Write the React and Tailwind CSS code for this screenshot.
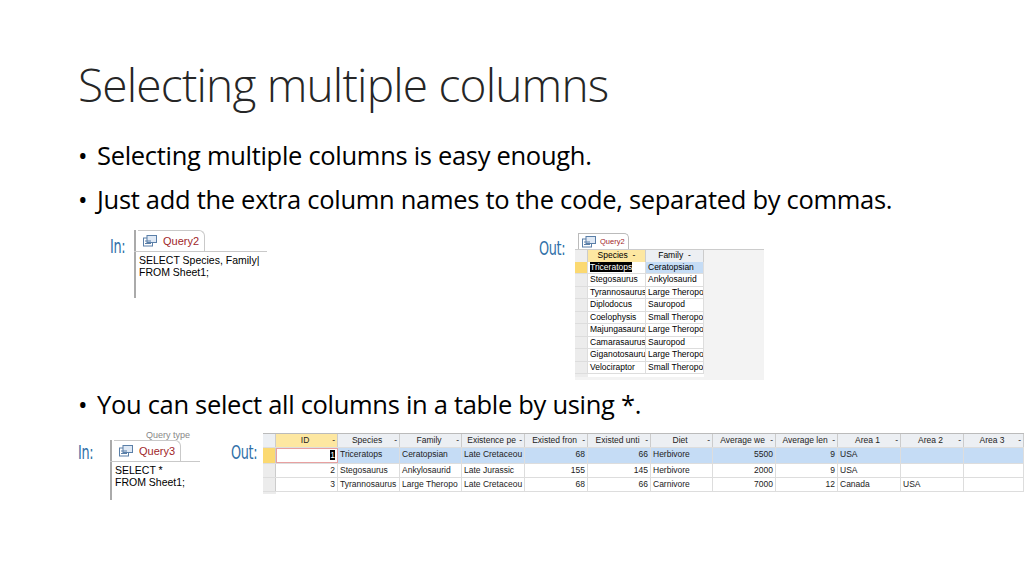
import React from "react";

const font = { fontFamily: '"Open Sans", "Noto Sans", sans-serif' };
const seg = { fontFamily: '"Liberation Sans", "DejaVu Sans", sans-serif' };

function TabIcon() {
  return (
    <svg width="14" height="12" viewBox="0 0 14 12">
      <rect x="0.5" y="3" width="9" height="8" fill="#fff" stroke="#5a7fa8" />
      <rect x="4" y="0.5" width="9.5" height="7" fill="#dfe9f5" stroke="#5a7fa8" />
      <line x1="2" y1="6" x2="8" y2="6" stroke="#5a7fa8" />
      <line x1="2" y1="8.5" x2="8" y2="8.5" stroke="#5a7fa8" />
    </svg>
  );
}

function QueryIn({ name, lines, w, extra, h }) {
  return (
    <div className="relative bg-white" style={{ width: w, ...seg }}>
      {extra}
      <div className="flex h-[22px] border-b border-[#c9c9c9]">
        <div className="w-[4px] border-l-2 border-[#aaa]" />
        <div className="flex items-center gap-[6px] px-[5px] border-r border-t border-[#c9c9c9] rounded-tr-[6px] bg-white">
          <TabIcon />
          <span className="text-[11px] text-[#a1262a]">{name}</span>
        </div>
      </div>
      <div className="flex">
        <div className="w-[4px] border-l-2 border-[#aaa]" style={{ height: h }} />
        <div className="text-[10.5px] leading-[12px] text-black pl-[1px] pt-[2px] whitespace-nowrap">
          {lines.map((l, i) => <div key={i}>{l}</div>)}
        </div>
      </div>
    </div>
  );
}

const small = [
  ["Triceratops", "Ceratopsian"], ["Stegosaurus", "Ankylosaurid"], ["Tyrannosaurus", "Large Theropo"],
  ["Diplodocus", "Sauropod"], ["Coelophysis", "Small Theropo"], ["Majungasaurus", "Large Theropo"],
  ["Camarasaurus", "Sauropod"], ["Giganotosauru", "Large Theropo"], ["Velociraptor", "Small Theropo"],
];

const cols = [
  ["ID", 62], ["Species", 62], ["Family", 62], ["Existence pe", 63], ["Existed fron", 63],
  ["Existed unti", 63], ["Diet", 62], ["Average we", 63], ["Average len", 62], ["Area 1", 63], ["Area 2", 63], ["Area 3", 60],
];
const rows = [
  ["1", "Triceratops", "Ceratopsian", "Late Cretaceou", "68", "66", "Herbivore", "5500", "9", "USA", "", ""],
  ["2", "Stegosaurus", "Ankylosaurid", "Late Jurassic", "155", "145", "Herbivore", "2000", "9", "USA", "", ""],
  ["3", "Tyrannosaurus", "Large Theropo", "Late Cretaceou", "68", "66", "Carnivore", "7000", "12", "Canada", "USA", ""],
];
const rightAlign = [0, 4, 5, 7, 8];

function Label({ t }) {
  return <span className="text-[19px] text-[#2f6fa8] tracking-tight" style={{ fontFamily: '"DejaVu Sans Condensed", "Liberation Sans Narrow", sans-serif', transform: "scaleX(0.75)", display: "inline-block", transformOrigin: "left" }}>{t}</span>;
}

export default function App() {
  return (
    <div className="w-[1024px] h-[576px] bg-white overflow-hidden relative" style={font}>
      <div className="pl-[78px] pt-[55px]">
        <h1 className="text-[46px] leading-[58px] text-[#262626] font-light" style={{ letterSpacing: "-0.8px" }}>Selecting multiple columns</h1>
        <ul className="mt-[20px] text-[25.5px] leading-[44px] text-black" style={{ letterSpacing: "-0.3px" }}>
          <li className="flex"><span className="w-[19px]">•</span>Selecting multiple columns is easy enough.</li>
          <li className="flex"><span className="w-[19px]">•</span>Just add the extra column names to the code, separated by commas.</li>
        </ul>
      </div>

      <div className="flex mt-[9px] h-[150px]">
        <div className="ml-[110px] pt-[2px] w-[24px]"><Label t="In:" /></div>
        <div><QueryIn name="Query2" w={133} h={46} lines={["SELECT Species, Family|", "FROM Sheet1;"]} /></div>
        <div className="ml-[272px] pt-[4px] w-[36px]"><Label t="Out:" /></div>
        <div className="w-[189px] bg-[#f3f3f3]" style={seg}>
          <div className="flex h-[20px] pt-[3px] border-b border-[#ccc] bg-white">
            <div className="w-[3px]" />
            <div className="flex items-center gap-[4px] px-[3px] border border-b-0 border-[#bbb] bg-white rounded-tr-[5px]">
              <TabIcon /><span className="text-[7.5px] text-[#a1262a]">Query2</span>
            </div>
          </div>
          <div className="text-[8.5px] leading-[11.5px]">
            <div className="flex">
              <div className="w-[13px] bg-[#eee] border-r border-[#ccc]" />
              <div className="w-[58px] bg-[#fde7a1] border-r border-[#ccc] text-center">Species&nbsp; -</div>
              <div className="w-[58px] bg-[#eceff3] border-r border-[#ccc] text-center">Family&nbsp; -</div>
            </div>
            {small.map((r, i) => (
              <div key={i} className="flex">
                <div className={`w-[13px] border-r border-b border-[#ddd] ${i === 0 ? "bg-[#fbd971]" : "bg-[#ececec]"}`} />
                <div className="w-[58px] border-r border-b border-[#ddd] bg-white pl-[2px] whitespace-nowrap overflow-hidden">
                  {i === 0 ? <span className="bg-black text-white">{r[0]}</span> : r[0]}
                </div>
                <div className={`w-[58px] border-r border-b border-[#ddd] pl-[2px] whitespace-nowrap overflow-hidden ${i === 0 ? "bg-[#c5dcf5]" : "bg-white"}`}>{r[1]}</div>
              </div>
            ))}
            <div className="h-[3px] flex"><div className="w-[13px] bg-[#ececec]" /><div className="w-[116px] bg-white" /></div>
          </div>
        </div>
      </div>

      <div className="pl-[78px] mt-[4px] text-[25.5px] leading-[40px] text-black flex" style={{ letterSpacing: "-0.3px" }}>
        <span className="w-[19px]">•</span>You can select all columns in a table by using *.
      </div>

      <div className="flex mt-[8px]">
        <div className="ml-[78px] pt-[6px] w-[32px]"><Label t="In:" /></div>
        <div>
          <QueryIn name="Query3" w={90} h={38} lines={["SELECT *", "FROM Sheet1;"]}
            extra={<div className="text-[9px] text-[#888] h-[8px] leading-[6px] overflow-hidden pl-[36px] whitespace-nowrap">Query type</div>} />
        </div>
        <div className="ml-[31px] pt-[6px] w-[32px]"><Label t="Out:" /></div>
        <div className="mt-[1px] border-t border-[#bbb] bg-white" style={seg}>
          <div className="text-[8.5px] leading-[13px] text-[#222]">
            <div className="flex bg-[#eceff3]">
              <div className="w-[13px] border-r border-[#ccc]" />
              {cols.map((c, i) => (
                <div key={i} className={`border-r border-[#ccc] whitespace-nowrap overflow-hidden flex justify-between px-[2px] ${i === 0 ? "bg-[#fde7a1]" : ""}`} style={{ width: c[1] }}>
                  <span className="flex-1 text-center">{c[0]}</span><span>-</span>
                </div>
              ))}
            </div>
            {rows.map((r, ri) => (
              <div key={ri} className={`flex border-t border-[#ddd] ${ri === 0 ? "bg-[#c5dcf5]" : ""}`}>
                <div className={`w-[13px] border-r border-[#ccc] ${ri === 0 ? "bg-[#fbd971]" : "bg-[#ececec]"}`} />
                {r.map((v, i) => (
                  <div key={i} className={`border-r border-[#ddd] whitespace-nowrap overflow-hidden px-[2px] ${rightAlign.includes(i) ? "text-right" : ""} ${ri === 0 && i === 0 ? "bg-white border border-[#e8a0a0]" : ""}`} style={{ width: cols[i][1] }}>
                    {ri === 0 && i === 0 ? <span className="bg-black text-white">1</span> : v}
                  </div>
                ))}
              </div>
            ))}
            <div className="h-[3px] border-t border-[#ddd] flex"><div className="w-[13px] bg-[#ececec]" /></div>
          </div>
        </div>
      </div>
    </div>
  );
}
